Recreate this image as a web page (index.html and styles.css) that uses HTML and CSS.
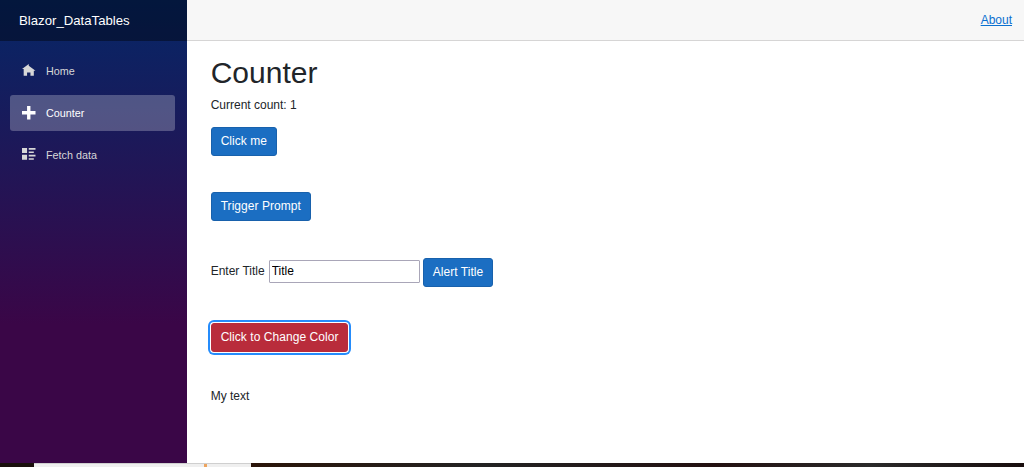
FILE: index.html
```html
<!DOCTYPE html>
<html lang="en">
<head>
<meta charset="utf-8">
<title>Counter</title>
<link rel="stylesheet" href="styles.css">
</head>
<body>
<div class="app">
  <aside class="sidebar">
    <div class="brand">Blazor_DataTables</div>
    <nav class="nav">
      <a class="nav-link" href="#">
        <svg class="nav-icon" viewBox="0 0 8 8"><path d="M4 0l-4 3h1v4h2v-2h2v2h2v-3.030l1 .03-4-3z"/></svg>
        <span>Home</span>
      </a>
      <a class="nav-link active" href="#">
        <svg class="nav-icon" viewBox="0 0 8 8"><path d="M3 0v3h-3v2h3v3h2v-3h3v-2h-3v-3h-2z"/></svg>
        <span>Counter</span>
      </a>
      <a class="nav-link" href="#">
        <svg class="nav-icon" viewBox="0 0 8 8"><path d="M0 0v3h3v-3h-3zm4 0v1h4v-1h-4zm0 2v1h3v-1h-3zm-4 2v3h3v-3h-3zm4 0v1h4v-1h-4zm0 2v1h3v-1h-3z"/></svg>
        <span>Fetch data</span>
      </a>
    </nav>
  </aside>
  <div class="main">
    <header class="topbar"><a class="about" href="#">About</a></header>
    <main class="content">
      <h1 class="title">Counter</h1>
      <p class="count">Current count: 1</p>
      <div class="row"><button class="btn">Click me</button></div>
      <div class="row"><button class="btn">Trigger Prompt</button></div>
      <div class="row">
        <label class="label" for="t">Enter Title</label>
        <input class="field" id="t" value="Title">
        <button class="btn">Alert Title</button>
      </div>
      <div class="row"><button class="btn btn-red">Click to Change Color</button></div>
      <p class="mytext">My text</p>
    </main>
  </div>
</div>
<div class="strip">
  <div class="strip-light"><span class="strip-dot"></span></div>
  <div class="strip-dark"></div>
</div>
</body>
</html>
```
FILE: styles.css
```css
* { box-sizing: border-box; }
html, body { margin: 0; height: 467px; overflow: hidden; }
body {
  font-family: "Liberation Sans", Arial, sans-serif;
  font-size: 12px;
  line-height: 18px;
  color: #212529;
  background: #fff;
  display: flex;
  flex-direction: column;
}
.app { display: flex; height: 463px; }
.sidebar {
  width: 186.67px;
  background: linear-gradient(180deg, #052767 0%, #3a0647 70%);
}
.brand {
  height: 41px;
  padding-left: 19px;
  display: flex;
  align-items: center;
  background: rgba(0, 0, 0, .4);
  color: #fff;
  font-size: 13.2px;
}
.nav { padding: 12px 12px 0 10px; display: flex; flex-direction: column; gap: 6px; }
.nav-link {
  height: 36px;
  padding-left: 12px;
  display: flex;
  align-items: center;
  border-radius: 3px;
  color: #d7d7d7;
  font-size: 10.8px;
  text-decoration: none;
}
.nav-link.active { background: rgba(255, 255, 255, .25); color: #fff; }
.nav-icon { width: 13.500px; height: 13.500px; margin-right: 10.500px; fill: currentColor; }
.main { flex: 1; display: flex; flex-direction: column; }
.topbar {
  height: 41px;
  display: flex;
  align-items: center;
  justify-content: flex-end;
  padding-right: 12px;
  background: #f7f7f7;
  border-bottom: 1px solid #d6d5d5;
}
.about { color: #0a70d0; }
.content { padding: 14px 24px 0; }
.title { margin: 0 0 5px; font-size: 30px; font-weight: 400; line-height: 36px; }
.count { margin: 0 0 13px; }
.row { margin-bottom: 36.33px; display: flex; align-items: center; }
.btn {
  height: 29px;
  padding: 0 9px 1px;
  border: 1px solid #1861ac;
  border-radius: 3px;
  background: #1b6ec2;
  color: #fff;
  font: inherit;
  letter-spacing: .05px;
}
.btn-red {
  background: #b92c3b;
  border-color: #b92c3b;
  box-shadow: 0 0 0 1px #fff, 0 0 0 3px #258cfb;
}
.label { margin-right: 3px; padding-bottom: 2px; }
.field {
  width: 151px;
  height: 23px;
  margin: 0 3px 2px 1px;
  padding: 0 2px;
  border: 1px solid #a9a6b8;
  border-radius: 1px;
  color: #000;
  font: inherit;
}
.mytext { margin: -1px 0 0; }
.strip { height: 4px; display: flex; background: #1a0f0c; }
.strip-light {
  width: 217px;
  margin-left: 34px;
  padding-left: 170px;
  background: #efefef;
  border-top: 1px solid #cfcfcf;
}
.strip-dot { display: block; width: 3px; height: 3px; background: #eda45e; }
.strip-dark { flex: 1; background: linear-gradient(90deg, #2a1408, #232323 30%, #231010 60%, #2a2a2a 80%, #180d0d); }
```
